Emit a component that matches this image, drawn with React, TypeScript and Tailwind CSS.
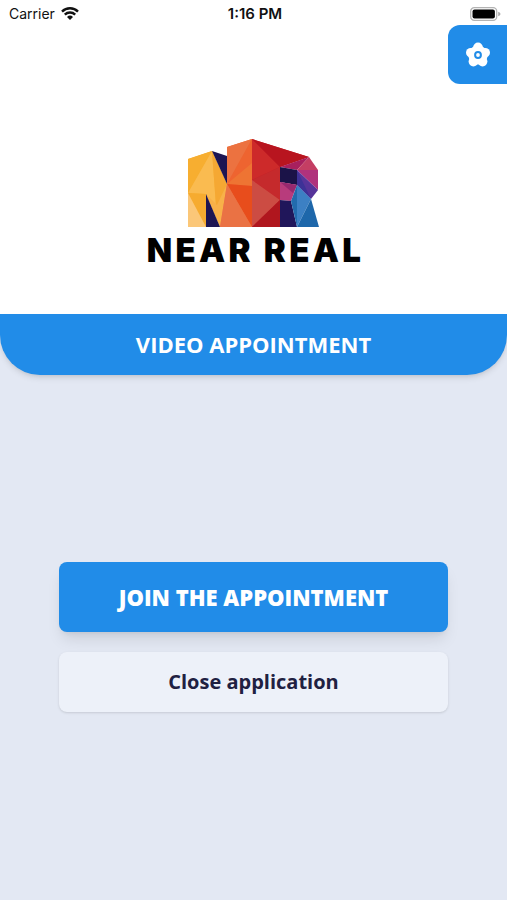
import React from 'react';

const logoFacets = [
  // N, left stem and diagonal
  { points: '0,20 24,12 39,45 32,88 18,55 18,88 0,88', fill: '#f8b233' },
  { points: '0,20 24,12 0,54', fill: '#f7ae30' },
  { points: '24,12 0,54 18,55 29,80', fill: '#fabb50' },
  { points: '0,54 18,55 18,88', fill: '#f6ab30' },
  { points: '0,54 18,88 0,88', fill: '#fbc778' },
  { points: '24,12 39,45 29,80', fill: '#f5a833' },
  { points: '39,45 32,88 18,55 29,66', fill: '#f8b149' },
  { points: '24,12 39,17 39,45', fill: '#1d1552' },
  { points: '18,55 32,88 18,88', fill: '#1d1552' },
  // N, right stem
  { points: '39,8 64,0 64,88 32,88 39,45', fill: '#ec6a37' },
  { points: '39,8 64,0 39,45', fill: '#ec7240' },
  { points: '64,0 64,47 39,45', fill: '#ee6430' },
  { points: '64,24 64,47 39,45', fill: '#ee7433' },
  { points: '39,45 64,47 64,88', fill: '#e84d1c' },
  { points: '39,45 64,88 32,88', fill: '#ea7244' },
  // R, stem and top
  { points: '64,0 121,18 92,28 92,88 64,88', fill: '#c51f28' },
  { points: '64,0 92,28 64,41', fill: '#cd2a2a' },
  { points: '64,0 121,18 92,28', fill: '#b8151f' },
  { points: '64,41 92,28 92,61', fill: '#c52a2c' },
  { points: '64,41 92,61 64,88', fill: '#cc4c43' },
  { points: '92,61 92,88 64,88', fill: '#b0161e' },
  // R, bowl
  { points: '92,28 121,18 109,31', fill: '#a8205e' },
  { points: '109,31 121,18 130,31', fill: '#c43e63' },
  { points: '109,31 130,31 130,51', fill: '#b0327c' },
  { points: '109,31 130,51 123,60 109,46', fill: '#56349a' },
  { points: '109,46 109,31 123,60', fill: '#3d3297' },
  { points: '92,28 109,31 109,46 92,43', fill: '#1b1348' },
  { points: '92,43 109,46 103,62 92,61', fill: '#b83b7c' },
  { points: '92,43 109,46 105,54', fill: '#97296f' },
  { points: '92,61 103,62 109,88 92,88', fill: '#20165a' },
  // R, leg
  { points: '109,46 109,88 103,62', fill: '#226bad' },
  { points: '109,46 123,60 109,88', fill: '#3c80c4' },
  { points: '123,60 131,88 109,88', fill: '#1e67aa' },
];

function WifiIcon() {
  return (
    <svg viewBox="0 0 18 13" className="w-[18px] h-[13px]" aria-hidden="true">
      <g fill="none" stroke="#111" strokeWidth="2.4">
        <path d="M1 4.6a11.3 11.3 0 0 1 16 0" />
        <path d="M3.8 7.7a7.4 7.4 0 0 1 10.4 0" />
      </g>
      <path d="M9 13 6 9.9a4.3 4.3 0 0 1 6 0z" fill="#111" />
    </svg>
  );
}

function BatteryIcon() {
  return (
    <svg viewBox="0 0 31 14" className="w-[31px] h-[14px]" aria-hidden="true">
      <rect x="0.7" y="0.7" width="26" height="12.6" rx="3.6" fill="none" stroke="#b3b3b3" strokeWidth="1.3" />
      <rect x="2.5" y="2.5" width="22.4" height="9" rx="2" fill="#000" />
      <path d="M28.2 4.8v4.4c1.6-.5 2.2-1.2 2.2-2.2s-.6-1.7-2.2-2.2z" fill="#a9a9a9" />
    </svg>
  );
}

function SettingsIcon() {
  return (
    <svg viewBox="0 0 26 26" className="w-[26px] h-[26px]" aria-hidden="true">
      <path
        d="M13 5.5 20.1 10.7 17.4 19.1 8.6 19.1 5.9 10.7z"
        fill="#fff"
        stroke="#fff"
        strokeWidth="7"
        strokeLinejoin="round"
      />
      <g fill="#fff">
        <circle cx="13" cy="5.4" r="4.8" />
        <circle cx="20.2" cy="10.7" r="4.8" />
        <circle cx="17.6" cy="19.6" r="4.8" />
        <circle cx="8.4" cy="19.6" r="4.8" />
        <circle cx="5.8" cy="10.7" r="4.8" />
      </g>
      <circle cx="13" cy="13" r="2.9" fill="#fff" stroke="#218ce8" strokeWidth="2" />
    </svg>
  );
}

function Logo() {
  return (
    <div className="flex flex-col items-center">
      <svg viewBox="0 0 131 89" className="w-[131px] h-[89px]" aria-hidden="true">
        {logoFacets.map((facet) => (
          <polygon key={facet.points} points={facet.points} fill={facet.fill} />
        ))}
      </svg>
      <span className="mt-1 pl-1 font-['Inter',sans-serif] text-[33px] leading-9 font-black tracking-widest text-black">
        NEAR REAL
      </span>
    </div>
  );
}

export default function App() {
  return (
    <div className="min-h-screen flex flex-col bg-[#e3e8f3] font-['Open_Sans',sans-serif]">
      <header className="bg-white">
        {/* Status bar */}
        <div className="grid grid-cols-3 items-center h-[25px] pl-[9px] pr-[6px] pt-[2px] font-['Inter',sans-serif] text-sm text-[#111]">
          <div className="flex items-center gap-[6px]">
            <span>Carrier</span>
            <WifiIcon />
          </div>
          <span className="text-center text-[15px] font-semibold">1:16 PM</span>
          <div className="flex justify-end">
            <BatteryIcon />
          </div>
        </div>

        <div className="flex justify-end">
          <button
            type="button"
            aria-label="Settings"
            className="w-[59px] h-[59px] flex items-center justify-center rounded-l-xl bg-[#218ce8] cursor-pointer"
          >
            <SettingsIcon />
          </button>
        </div>

        <div className="pt-[55px] pb-[46px]">
          <Logo />
        </div>
      </header>

      <h1 className="py-4 rounded-b-[40px] bg-[#218ce8] text-center text-[22px] leading-[29px] font-bold text-white shadow-md">
        VIDEO APPOINTMENT
      </h1>

      <main className="flex flex-col gap-5 px-[59px] pt-[187px] pb-10">
        <button
          type="button"
          className="h-[70px] rounded-lg bg-[#218ce8] text-[22px] font-extrabold text-white shadow-lg cursor-pointer"
        >
          JOIN THE APPOINTMENT
        </button>
        <button
          type="button"
          className="h-[60px] rounded-lg bg-[#edf1f9] text-[20px] font-bold text-[#1f2142] shadow-sm cursor-pointer"
        >
          Close application
        </button>
      </main>
    </div>
  );
}
